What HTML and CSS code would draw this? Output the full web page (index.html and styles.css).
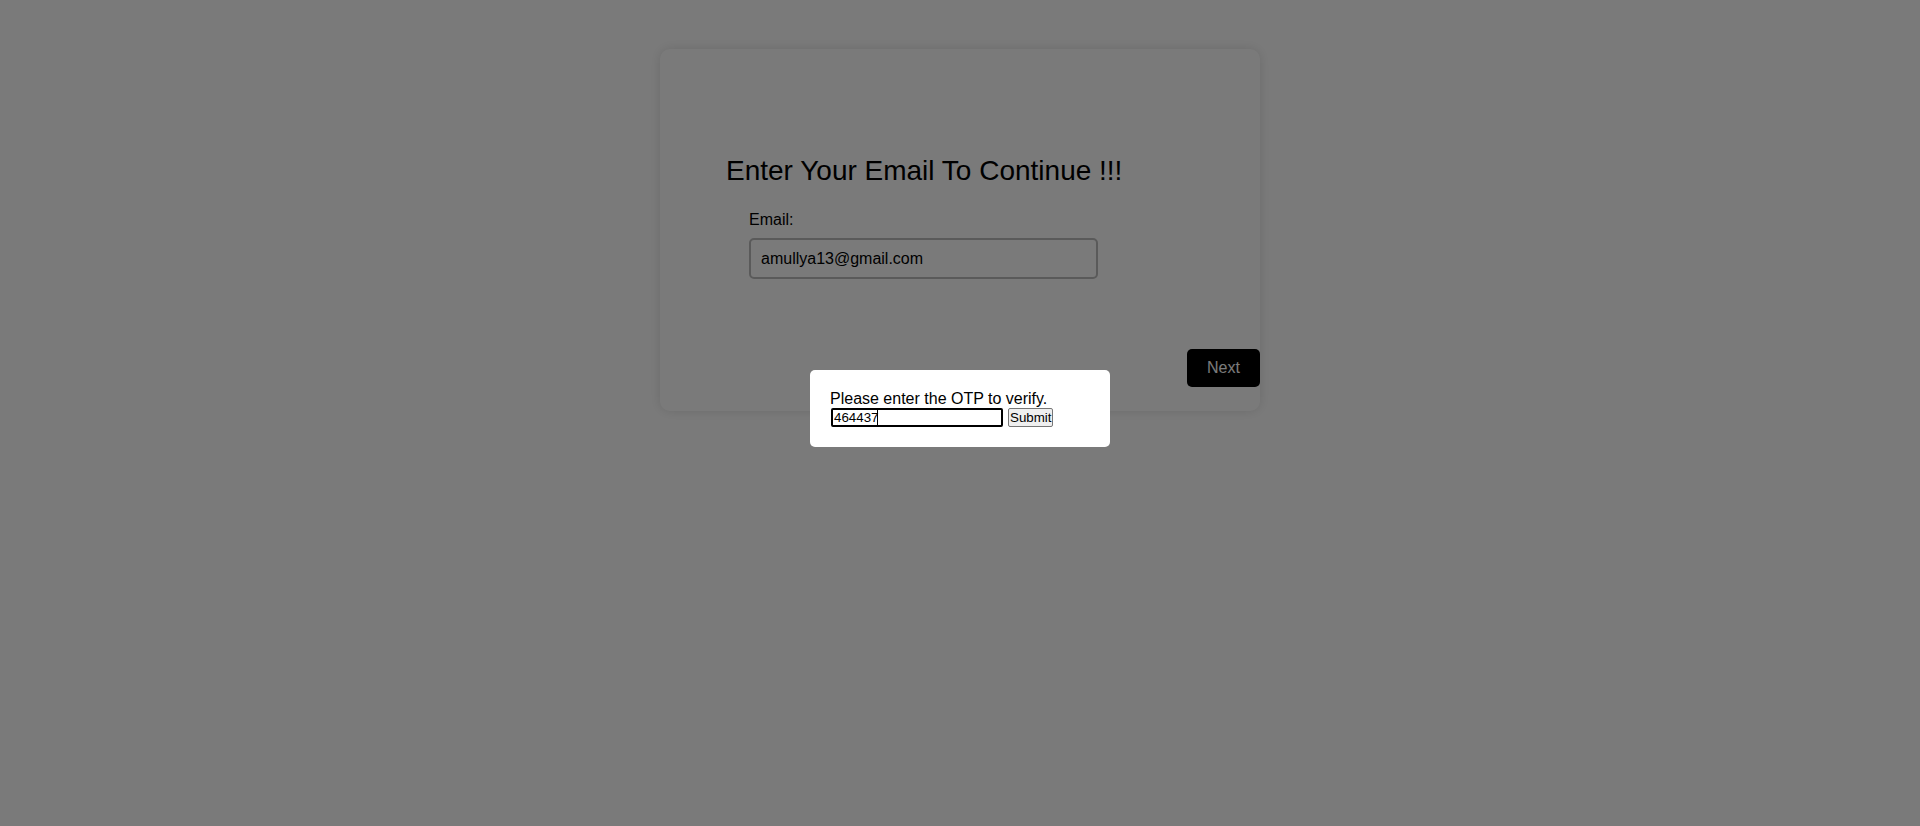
FILE: index.html
```html
<!DOCTYPE html>
<html lang="en">
<head>
<meta charset="utf-8">
<title>Verify Email</title>
<link rel="stylesheet" href="styles.css">
</head>
<body>
  <main class="card">
    <h2 class="card-title">Enter Your Email To Continue !!!</h2>
    <form class="email-form">
      <label class="field-label" for="email">Email:</label>
      <input class="field-input" id="email" type="email" value="amullya13@gmail.com">
    </form>
    <div class="card-footer">
      <button class="next-btn" type="button">Next</button>
    </div>
  </main>

  <div class="overlay">
    <div class="modal">
      <p class="modal-text">Please enter the OTP to verify.</p>
      <div class="otp-row">
        <span class="otp-wrap">
          <input class="otp-input" type="text" value="464437">
          <span class="caret"></span>
        </span>
        <button class="otp-submit" type="button">Submit</button>
      </div>
    </div>
  </div>
</body>
</html>
```

FILE: styles.css
```css
html, body {
  margin: 0;
  padding: 0;
  height: 100%;
}

body {
  background: #ffffff;
  font-family: "Liberation Sans", Arial, sans-serif;
  color: #000;
}

.card {
  width: 600px;
  box-sizing: border-box;
  margin: 49px auto 0;
  padding: 106px 0 24px;
  background: #ffffff;
  border-radius: 10px;
  box-shadow: 0 0 12px rgba(0, 0, 0, 0.12);
  display: flex;
  flex-direction: column;
}

.card-title {
  margin: 0 0 0 66px;
  font-size: 28px;
  font-weight: 400;
  line-height: 32px;
}

.email-form {
  display: flex;
  flex-direction: column;
  align-items: flex-start;
  margin: 24px 0 0 89px;
}

.field-label {
  font-size: 16px;
  line-height: 18px;
}

.field-input {
  margin-top: 9px;
  width: 349px;
  height: 41px;
  box-sizing: border-box;
  padding: 0 10px;
  border: 2px solid #bdbdbd;
  border-radius: 5px;
  font-family: "Liberation Sans", Arial, sans-serif;
  font-size: 16px;
  color: #000;
  background: #fff;
}

.card-footer {
  display: flex;
  justify-content: flex-end;
  margin-top: 70px;
}

.next-btn {
  width: 73px;
  height: 38px;
  padding: 0;
  border: none;
  border-radius: 5px;
  background: #000;
  color: #fff;
  font-family: "Liberation Sans", Arial, sans-serif;
  font-size: 16px;
}

.overlay {
  position: fixed;
  inset: 0;
  background: rgba(0, 0, 0, 0.52);
  display: flex;
  justify-content: center;
  align-items: flex-start;
  padding-top: 370px;
  box-sizing: border-box;
}

.modal {
  width: 300px;
  box-sizing: border-box;
  padding: 20px;
  background: #fff;
  border-radius: 5px;
}

.modal-text {
  margin: 0;
  font-size: 16px;
  line-height: 18px;
}

.otp-row {
  display: flex;
  align-items: center;
  gap: 5px;
  padding-left: 1px;
}

.otp-wrap {
  position: relative;
  display: block;
  height: 19px;
}

.otp-input {
  display: block;
  width: 172px;
  height: 19px;
  box-sizing: border-box;
  margin: 0;
  padding: 0 1px;
  border: 2px solid #000;
  border-radius: 2px;
  font-family: "Liberation Sans", Arial, sans-serif;
  font-size: 13.33px;
  color: #000;
  background: #fff;
  outline: none;
}

.caret {
  position: absolute;
  left: 46px;
  top: 2px;
  width: 1px;
  height: 15px;
  background: #000;
}

.otp-submit {
  height: 19px;
  box-sizing: border-box;
  margin: 0;
  padding: 0 1px;
  border: 1px solid #767676;
  border-radius: 2px;
  background: #efefef;
  font-family: "Liberation Sans", Arial, sans-serif;
  font-size: 13.33px;
  color: #000;
  line-height: 15px;
}
```
